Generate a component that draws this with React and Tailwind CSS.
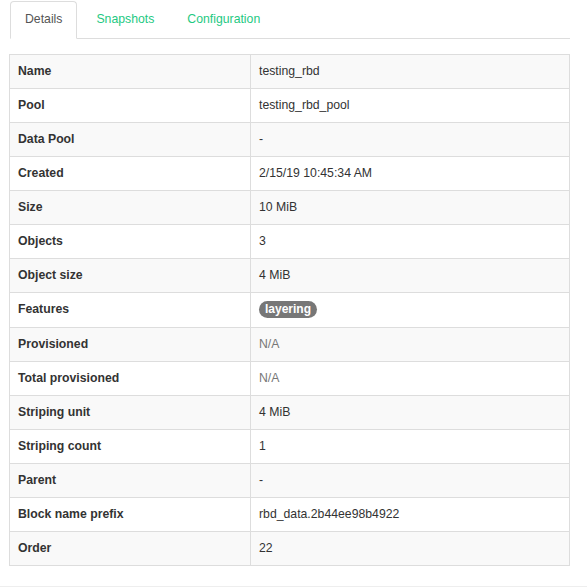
import React from "react";

const rows = [
  ["Name", "testing_rbd"],
  ["Pool", "testing_rbd_pool"],
  ["Data Pool", "-"],
  ["Created", "2/15/19 10:45:34 AM"],
  ["Size", "10 MiB"],
  ["Objects", "3"],
  ["Object size", "4 MiB"],
  ["Features", { badge: "layering" }],
  ["Provisioned", { muted: "N/A" }],
  ["Total provisioned", { muted: "N/A" }],
  ["Striping unit", "4 MiB"],
  ["Striping count", "1"],
  ["Parent", "-"],
  ["Block name prefix", "rbd_data.2b44ee98b4922"],
  ["Order", "22"],
];

function Value({ v }) {
  if (typeof v === "string") return <span>{v}</span>;
  if (v.badge)
    return (
      <span className="inline-block rounded-full bg-[#777] px-[6px] py-[2px] text-[12px] font-bold leading-[13px] text-white">
        {v.badge}
      </span>
    );
  return <span className="text-[#777]">{v.muted}</span>;
}

export default function App() {
  return (
    <div
      className="h-[587px] w-[587px] bg-white text-[12.25px] text-[#333]"
      style={{ fontFamily: '"Liberation Sans", Arial, sans-serif' }}
    >
      <div className="px-[10px] pt-px w-[580px]">
        <div className="flex border-b border-[#ddd] h-[38px]">
          <div className="-mb-px flex h-[38px] items-center rounded-t-[4px] border border-b-white border-[#ddd] bg-white pb-px px-[14px] text-[#555]">
            Details
          </div>
          <div className="flex h-[37px] items-center pb-px pl-[19px] pr-[18px] text-[#1ec982]">Snapshots</div>
          <div className="flex h-[37px] items-center pb-px px-[15px] text-[#1ec982]">Configuration</div>
        </div>
      </div>
      <div className="pl-[9px] pt-[15px] w-[579px]">
        <table className="w-[561px] border-collapse border border-[#ddd]">
          <tbody>
            {rows.map(([k, v], i) => (
              <tr key={k} className={i % 2 === 0 ? "bg-[#f9f9f9]" : "bg-white"}>
                <td className="h-[34px] w-[241px] border border-[#ddd] px-[8px] pb-px font-bold">{k}</td>
                <td className={`border border-[#ddd] px-[8px] pb-px ${v.badge ? "h-[35px]" : "h-[34px]"}`}>
                  <Value v={v} />
                </td>
              </tr>
            ))}
          </tbody>
        </table>
      </div>
      <div className="mt-[20px] h-px w-full bg-[#eee]" />
    </div>
  );
}
